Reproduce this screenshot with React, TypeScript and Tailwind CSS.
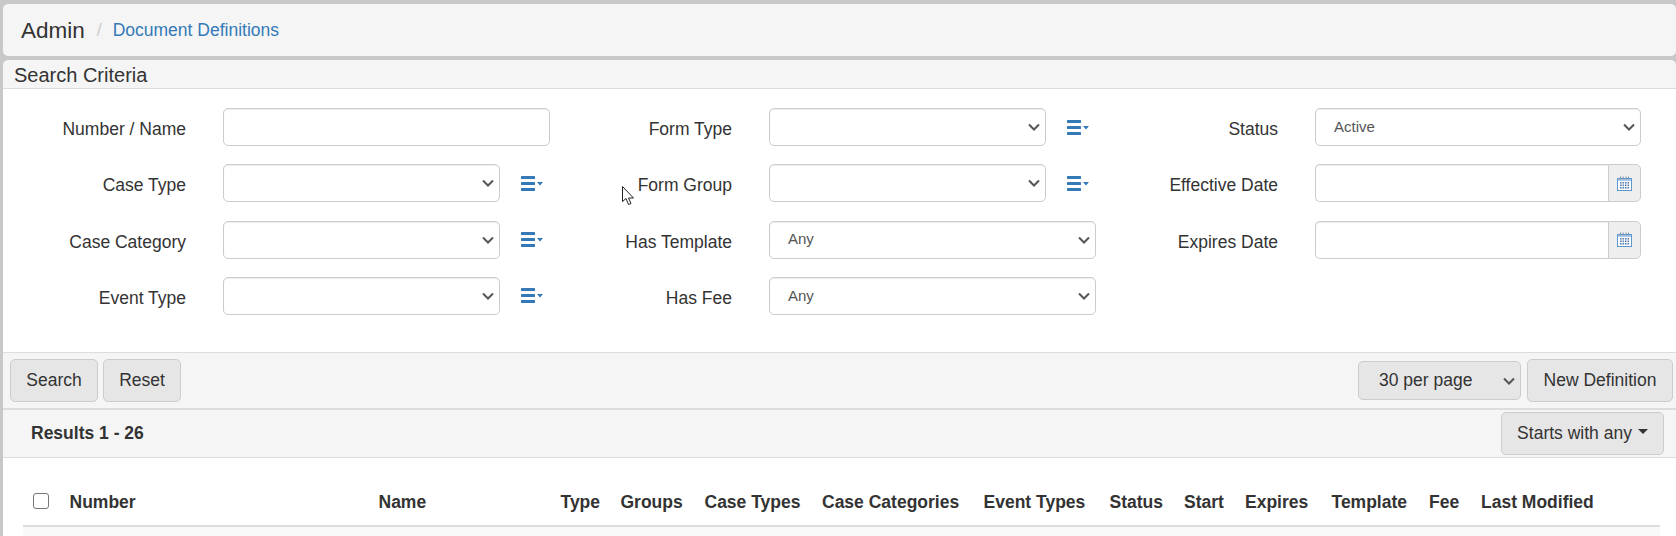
import React from "react";

type Field = {
  label: string;
  kind: "input" | "select" | "list" | "date";
  value?: string;
  width?: string;
};

const columns: Field[][] = [
  [
    { label: "Number / Name", kind: "input" },
    { label: "Case Type", kind: "list" },
    { label: "Case Category", kind: "list" },
    { label: "Event Type", kind: "list" },
  ],
  [
    { label: "Form Type", kind: "list" },
    { label: "Form Group", kind: "list" },
    { label: "Has Template", kind: "select", value: "Any" },
    { label: "Has Fee", kind: "select", value: "Any" },
  ],
  [
    { label: "Status", kind: "select", value: "Active", width: "w-[326px]" },
    { label: "Effective Date", kind: "date" },
    { label: "Expires Date", kind: "date" },
  ],
];

const tableColumns = [
  { name: "Number", width: "w-[309px]" },
  { name: "Name", width: "w-[182px]" },
  { name: "Type", width: "w-[60px]" },
  { name: "Groups", width: "w-[84px]" },
  { name: "Case Types", width: "w-[117.5px]" },
  { name: "Case Categories", width: "w-[161.5px]" },
  { name: "Event Types", width: "w-[126px]" },
  { name: "Status", width: "w-[74.5px]" },
  { name: "Start", width: "w-[61px]" },
  { name: "Expires", width: "w-[86.5px]" },
  { name: "Template", width: "w-[97.5px]" },
  { name: "Fee", width: "w-[52px]" },
  { name: "Last Modified", width: "w-[179px]" },
];

const controlClass =
  "h-[38px] rounded-[5px] border border-[#ccc] bg-white shadow-[inset_0_1px_1px_rgba(0,0,0,0.075)]";

function Chevron() {
  return (
    <svg
      width="12"
      height="8"
      viewBox="0 0 12 8"
      className="pointer-events-none absolute right-[6px] top-1/2 -translate-y-1/2"
    >
      <path d="M1 1.5l5 5 5-5" fill="none" stroke="#555" strokeWidth="2" />
    </svg>
  );
}

function ListIcon() {
  return (
    <svg width="22" height="15" viewBox="0 0 22 15" className="ml-[21px] shrink-0">
      <rect x="0" y="0" width="14" height="3" rx="0.5" fill="#337ab7" />
      <rect x="0" y="6" width="14" height="3" rx="0.5" fill="#337ab7" />
      <rect x="0" y="12" width="14" height="3" rx="0.5" fill="#337ab7" />
      <path d="M16 6h6l-3 3.5z" fill="#337ab7" />
    </svg>
  );
}

function CalendarIcon() {
  const dots = [];
  for (let row = 0; row < 3; row++) {
    for (let col = 0; col < 4; col++) {
      dots.push(
        <rect key={`${row}-${col}`} x={3 + col * 2.5} y={6 + row * 2.5} width="1.6" height="1.6" fill="#5b7fae" />
      );
    }
  }
  return (
    <svg width="15" height="15" viewBox="0 0 15 15">
      <rect x="0.5" y="2.5" width="14" height="12" fill="#fff" stroke="#5b9bd5" />
      <rect x="1" y="3" width="13" height="2" fill="#a9c8e8" />
      <path d="M3.5 0.5v3M6 0.5v3M9 0.5v3M11.5 0.5v3" stroke="#7a8fa8" />
      {dots}
    </svg>
  );
}

function SelectBox({ value, width }: { value?: string; width: string }) {
  return (
    <div className={`relative ${width}`}>
      <select
        defaultValue={value ?? ""}
        className={`${controlClass} w-full appearance-none pl-[18px] text-[15px] text-[#555]`}
      >
        <option value={value ?? ""}>{value ?? ""}</option>
      </select>
      <Chevron />
    </div>
  );
}

function FieldControl({ field }: { field: Field }) {
  if (field.kind === "input") {
    return <input type="text" className={`${controlClass} w-[327px]`} />;
  }
  if (field.kind === "select") {
    return <SelectBox value={field.value} width={field.width ?? "w-[327px]"} />;
  }
  if (field.kind === "list") {
    return (
      <div className="flex items-center">
        <SelectBox width="w-[277px]" />
        <ListIcon />
      </div>
    );
  }
  return (
    <div className="flex w-[326px]">
      <input type="text" className={`${controlClass} w-[293px] rounded-r-none border-r-0`} />
      <div className="flex h-[38px] w-[33px] items-center justify-center rounded-r-[5px] border border-[#ccc] bg-[#eee]">
        <CalendarIcon />
      </div>
    </div>
  );
}

export default function App() {
  return (
    <div className="relative flex h-[536px] w-[1676px] flex-col overflow-hidden bg-[#c8c8c8] pl-[3px] pt-[4px] font-['Liberation_Sans',Arial,sans-serif] text-[17.5px] text-[#333]">
      {/* Breadcrumb */}
      <div className="flex h-[52px] shrink-0 items-center rounded-[5px] bg-[#f5f5f5] pl-[18px] pt-[1px]">
        <span className="text-[22.5px]">Admin</span>
        <span className="ml-[12px] text-[#ccc]">/</span>
        <a className="ml-[11px] text-[#337ab7]">Document Definitions</a>
      </div>

      {/* Search panel */}
      <div className="mt-[4px] shrink-0">
        <div className="flex h-[29px] items-center rounded-t-[5px] border-b border-[#ddd] bg-[#f5f5f5] pl-[11px] pt-[1px] text-[20px]">
          Search Criteria
        </div>
        <div className="flex h-[263px] bg-white pl-[15px] pt-[19px]">
          {columns.map((fields, i) => (
            <div key={i} className="flex w-[546px] flex-col gap-[18.33px]">
              {fields.map((field) => (
                <div key={field.label} className="flex items-center">
                  <label className="w-[168px] pt-[4px] text-right">{field.label}</label>
                  <div className="ml-[37px]">
                    <FieldControl field={field} />
                  </div>
                </div>
              ))}
            </div>
          ))}
        </div>
        <div className="flex h-[56px] items-center justify-between border-t border-[#ddd] bg-[#f5f5f5] pl-[7px] pr-[3px]">
          <div className="flex gap-[5px]">
            <button className="h-[43px] w-[88px] rounded-[5px] border border-[#ccc] bg-[#e6e6e6]">Search</button>
            <button className="h-[43px] w-[78px] rounded-[5px] border border-[#ccc] bg-[#e6e6e6]">Reset</button>
          </div>
          <div className="flex items-center gap-[6px]">
            <div className="relative w-[163px]">
              <select className="h-[39px] w-full appearance-none rounded-[5px] border border-[#ccc] bg-[#e6e6e6] pl-[20px]">
                <option>30 per page</option>
              </select>
              <Chevron />
            </div>
            <button className="h-[43px] w-[146px] rounded-[5px] border border-[#ccc] bg-[#e6e6e6]">New Definition</button>
          </div>
        </div>
      </div>

      {/* Results */}
      <div className="flex-1 border-t-[2px] border-[#ddd] bg-white">
        <div className="flex h-[48px] items-center justify-between border-b border-[#ddd] bg-[#f5f5f5] pl-[28px] pr-[12px]">
          <span className="font-bold">Results 1 - 26</span>
          <button className="flex h-[43px] w-[163px] items-center justify-center rounded-[5px] border border-[#ccc] bg-[#e6e6e6]">
            Starts with any
            <span className="mb-[4px] ml-[6px] h-0 w-0 border-x-[5px] border-t-[5px] border-x-transparent border-t-[#333]" />
          </button>
        </div>
        <div className="pl-[20px] pt-[22px]">
          <table className="w-[1637px] table-fixed border-collapse">
            <thead>
              <tr className="h-[46px] border-b-[2.5px] border-[#ddd]">
                <th className="w-[46.5px] pl-[10px] text-left">
                  <span className="mb-[3px] block h-[16px] w-[16px] rounded-[3px] border border-[#767676] bg-white" />
                </th>
                {tableColumns.map((col) => (
                  <th key={col.name} className={`${col.width} whitespace-nowrap text-left font-bold`}>
                    {col.name}
                  </th>
                ))}
              </tr>
            </thead>
            <tbody>
              <tr className="h-[40px] bg-[#f9f9f9]">
                <td colSpan={14} />
              </tr>
            </tbody>
          </table>
        </div>
      </div>

      {/* Mouse pointer */}
      <svg width="13" height="20" viewBox="0 0 13 20" className="absolute left-[622px] top-[186px]">
        <path d="M0.5 0.5v15l3.5-3 2.5 6 2.5-1-2.5-5.5h5z" fill="#fff" stroke="#222" />
      </svg>
    </div>
  );
}
